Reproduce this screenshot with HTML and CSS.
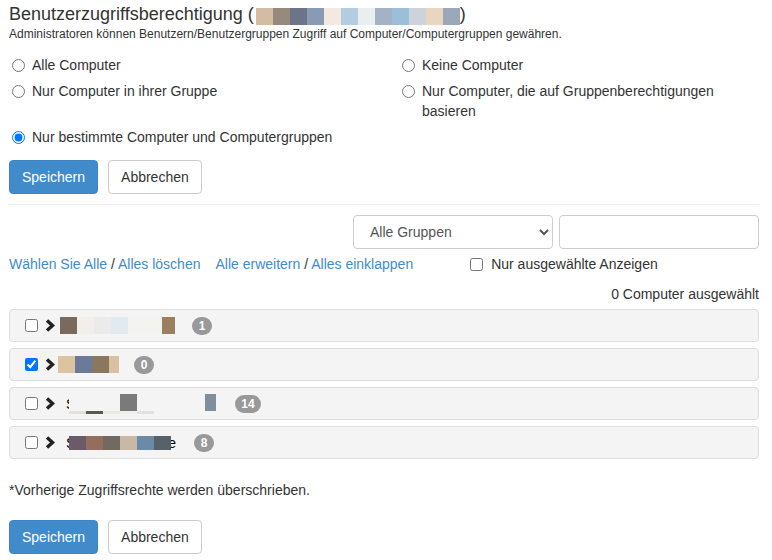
FILE: index.html
```html
<!DOCTYPE html>
<html>
<head>
<meta charset="utf-8">
<link rel="stylesheet" href="styles.css">
</head>
<body>
<div class="page">
  <h3 class="title">Benutzerzugriffsberechtigung (<span class="mosaic mosaic_title"><i style="background:#d4bca2"></i><i style="background:#968a7c"></i><i style="background:#6c7487"></i><i style="background:#889bb5"></i><i style="background:#f4e8df"></i><i style="background:#b2cde1"></i><i style="background:#e9eeee"></i><i style="background:#a3b2c6"></i><i style="background:#9bbfdb"></i><i style="background:#ccd3da"></i><i style="background:#e8d6c0"></i><i style="background:#9aa8b8"></i></span>)</h3>
  <p class="hint">Administratoren können Benutzern/Benutzergruppen Zugriff auf Computer/Computergruppen gewähren.</p>

  <div class="options">
    <label class="option"><input type="radio" name="scope"> Alle Computer</label>
    <label class="option"><input type="radio" name="scope"> Keine Computer</label>
    <label class="option"><input type="radio" name="scope"> Nur Computer in ihrer Gruppe</label>
    <label class="option"><input type="radio" name="scope"> <span>Nur Computer, die auf Gruppenberechtigungen basieren</span></label>
    <label class="option"><input type="radio" name="scope" checked> Nur bestimmte Computer und Computergruppen</label>
  </div>

  <div class="actions">
    <button class="btn btn_primary">Speichern</button>
    <button class="btn">Abbrechen</button>
  </div>

  <hr class="divider">

  <div class="filter">
    <select class="field field_select"><option>Alle Gruppen</option></select>
    <input class="field field_input" type="text">
  </div>

  <div class="tools">
    <span class="tools__group"><a href="#">Wählen Sie Alle</a> / <a href="#">Alles löschen</a></span>
    <span class="tools__group"><a href="#">Alle erweitern</a> / <a href="#">Alles einklappen</a></span>
    <label class="tools__check"><input type="checkbox"> Nur ausgewählte Anzeigen</label>
  </div>

  <div class="count">0 Computer ausgewählt</div>

  <ul class="groups">
    <li class="group">
      <input type="checkbox">
      <svg class="chevron" width="10" height="13" viewBox="0 0 10 13"><path d="M2 1.5 L7.5 6.5 L2 11.5" fill="none" stroke="#222" stroke-width="3.4"/></svg>
      <span class="mosaic mosaic_row"><i style="background:#7a6a5e"></i><i style="background:#f2efea"></i><i style="background:#ebebeb"></i><i style="background:#e1eaf0"></i><i style="background:#f3f3ef"></i><i style="background:#f3f3ef"></i><i style="background:#9c7e60;width:13px"></i></span>
      <span class="badge">1</span>
    </li>
    <li class="group">
      <input type="checkbox" checked>
      <svg class="chevron" width="10" height="13" viewBox="0 0 10 13"><path d="M2 1.5 L7.5 6.5 L2 11.5" fill="none" stroke="#222" stroke-width="3.4"/></svg>
      <span class="mosaic mosaic_row mosaic_short"><i style="background:#dcc4a0"></i><i style="background:#6a7a98"></i><i style="background:#8a7760"></i><i style="background:#d8c0a0;width:10px"></i></span>
      <span class="badge">0</span>
    </li>
    <li class="group">
      <input type="checkbox">
      <svg class="chevron" width="10" height="13" viewBox="0 0 10 13"><path d="M2 1.5 L7.5 6.5 L2 11.5" fill="none" stroke="#222" stroke-width="3.4"/></svg>
      <span class="name name_cut">
        <span class="name__letter">S</span>
        <span class="mosaic mosaic_split">
          <span class="mosaic__top"><i style="background:#f4f4f4;width:51px"></i><i style="background:#7a7a7a"></i><i style="background:#f4f4f4;width:68px"></i><i style="background:#7f8e9a;width:11px"></i></span>
          <span class="mosaic__bottom"><i style="background:#e0e0e0"></i><i style="background:#5a5850"></i><i style="background:#ebe8e2"></i><i style="background:#f0efea"></i><i style="background:#e0e0e0"></i></span>
        </span>
      </span>
      <span class="badge">14</span>
    </li>
    <li class="group">
      <input type="checkbox">
      <svg class="chevron" width="10" height="13" viewBox="0 0 10 13"><path d="M2 1.5 L7.5 6.5 L2 11.5" fill="none" stroke="#222" stroke-width="3.4"/></svg>
      <span class="name name_last">St<span class="mosaic mosaic_inline"><i style="background:#6c5a6a"></i><i style="background:#936e5c"></i><i style="background:#706a60"></i><i style="background:#c8b8a8"></i><i style="background:#6a8aa8"></i><i style="background:#566268"></i></span>e</span>
      <span class="badge">8</span>
    </li>
  </ul>

  <p class="note">*Vorherige Zugriffsrechte werden überschrieben.</p>

  <div class="actions actions_bottom">
    <button class="btn btn_primary">Speichern</button>
    <button class="btn">Abbrechen</button>
  </div>
</div>
</body>
</html>
```

FILE: styles.css
```css
body {
    margin: 0;
    font-family: "Liberation Sans", Arial, sans-serif;
    font-size: 14px;
    color: #333;
    background: #fff;
}

.page {
    width: 750px;
    padding: 3px 0 0 9px;
}

.title {
    margin: 0;
    font-size: 18px;
    font-weight: normal;
    line-height: 22px;
    display: flex;
    align-items: center;
}

.mosaic {
    display: inline-flex;
}

.mosaic i {
    display: block;
    width: 17px;
}

.mosaic_title {
    height: 17px;
    margin: 4px 0 0 2px;
}

.hint {
    margin: 1px 0 0;
    font-size: 12px;
    line-height: 16px;
}

.options {
    display: grid;
    grid-template-columns: 390px 360px;
    row-gap: 6px;
    margin-top: 13px;
}

.option {
    display: flex;
    align-items: flex-start;
    line-height: 20px;
}

.option input {
    width: 13px;
    height: 13px;
    margin: 4px 7px 0 3px;
    flex: none;
}

.actions {
    display: flex;
    gap: 10px;
    margin-top: 13px;
}

.actions_bottom {
    margin-top: 20px;
}

.btn {
    font-family: inherit;
    font-size: 14px;
    line-height: 20px;
    padding: 6px 12px;
    border: 1px solid #ccc;
    border-radius: 4px;
    background: #fff;
    color: #333;
}

.btn_primary {
    background: #428bca;
    border-color: #3c84c2;
    color: #fff;
}

.divider {
    margin: 10px 0 0;
    border: 0;
    border-top: 1px solid #eee;
}

.filter {
    display: flex;
    justify-content: flex-end;
    gap: 6px;
    margin-top: 10px;
}

.field {
    height: 34px;
    box-sizing: border-box;
    border: 1px solid #ccc;
    border-radius: 4px;
    background: #fff;
    font-family: inherit;
    font-size: 14px;
    color: #555;
}

.field_select {
    width: 200px;
    padding: 0 8px 0 12px;
}

.field_input {
    width: 200px;
}

.tools {
    display: flex;
    align-items: center;
    margin-top: 5px;
    line-height: 20px;
}

.tools__group {
    color: #333;
    margin-right: 15px;
}

.tools__group a {
    color: #428bca;
    text-decoration: none;
}

.tools__check {
    display: flex;
    align-items: center;
    margin-left: 42px;
}

.tools__check input {
    width: 13px;
    height: 13px;
    margin: 0 8px 0 0;
}

.count {
    text-align: right;
    margin-top: 10px;
    line-height: 20px;
}

.groups {
    list-style: none;
    margin: 5px 0 0;
    padding: 0;
    display: flex;
    flex-direction: column;
    gap: 6px;
}

.group {
    display: flex;
    align-items: center;
    height: 33px;
    box-sizing: border-box;
    padding-left: 14px;
    background: #f4f4f4;
    border: 1px solid #ddd;
    border-radius: 4px;
}

.group input {
    width: 13px;
    height: 13px;
    margin: 0 7px 0 1px;
}

.chevron {
    flex: none;
    margin-right: 5px;
}

.mosaic_row {
    height: 17px;
}

.mosaic_row + .badge {
    margin-left: 17px;
}

.mosaic_short {
    margin-left: -2px;
}

.mosaic_short + .badge {
    margin-left: 15px;
}

.badge {
    display: inline-block;
    min-width: 20px;
    height: 18px;
    box-sizing: border-box;
    padding: 0 6px;
    border-radius: 10px;
    background: #999;
    color: #fff;
    font-size: 12px;
    font-weight: bold;
    line-height: 18px;
    text-align: center;
}

.name {
    display: inline-flex;
    align-items: center;
    color: #000;
    margin-left: 6px;
    margin-right: 18px;
}

.name_cut {
    margin-right: 19px;
}

.name__letter {
    margin-right: -6px;
}

.mosaic_split {
    flex-direction: column;
    position: relative;
}

.mosaic__top, .mosaic__bottom {
    display: flex;
}

.mosaic__top {
    height: 17px;
}

.mosaic__bottom {
    height: 3px;
}

.mosaic_inline {
    height: 14px;
    margin-left: -10px;
    margin-right: -3px;
    position: relative;
}

.note {
    margin: 21px 0 0;
    line-height: 20px;
}
```
